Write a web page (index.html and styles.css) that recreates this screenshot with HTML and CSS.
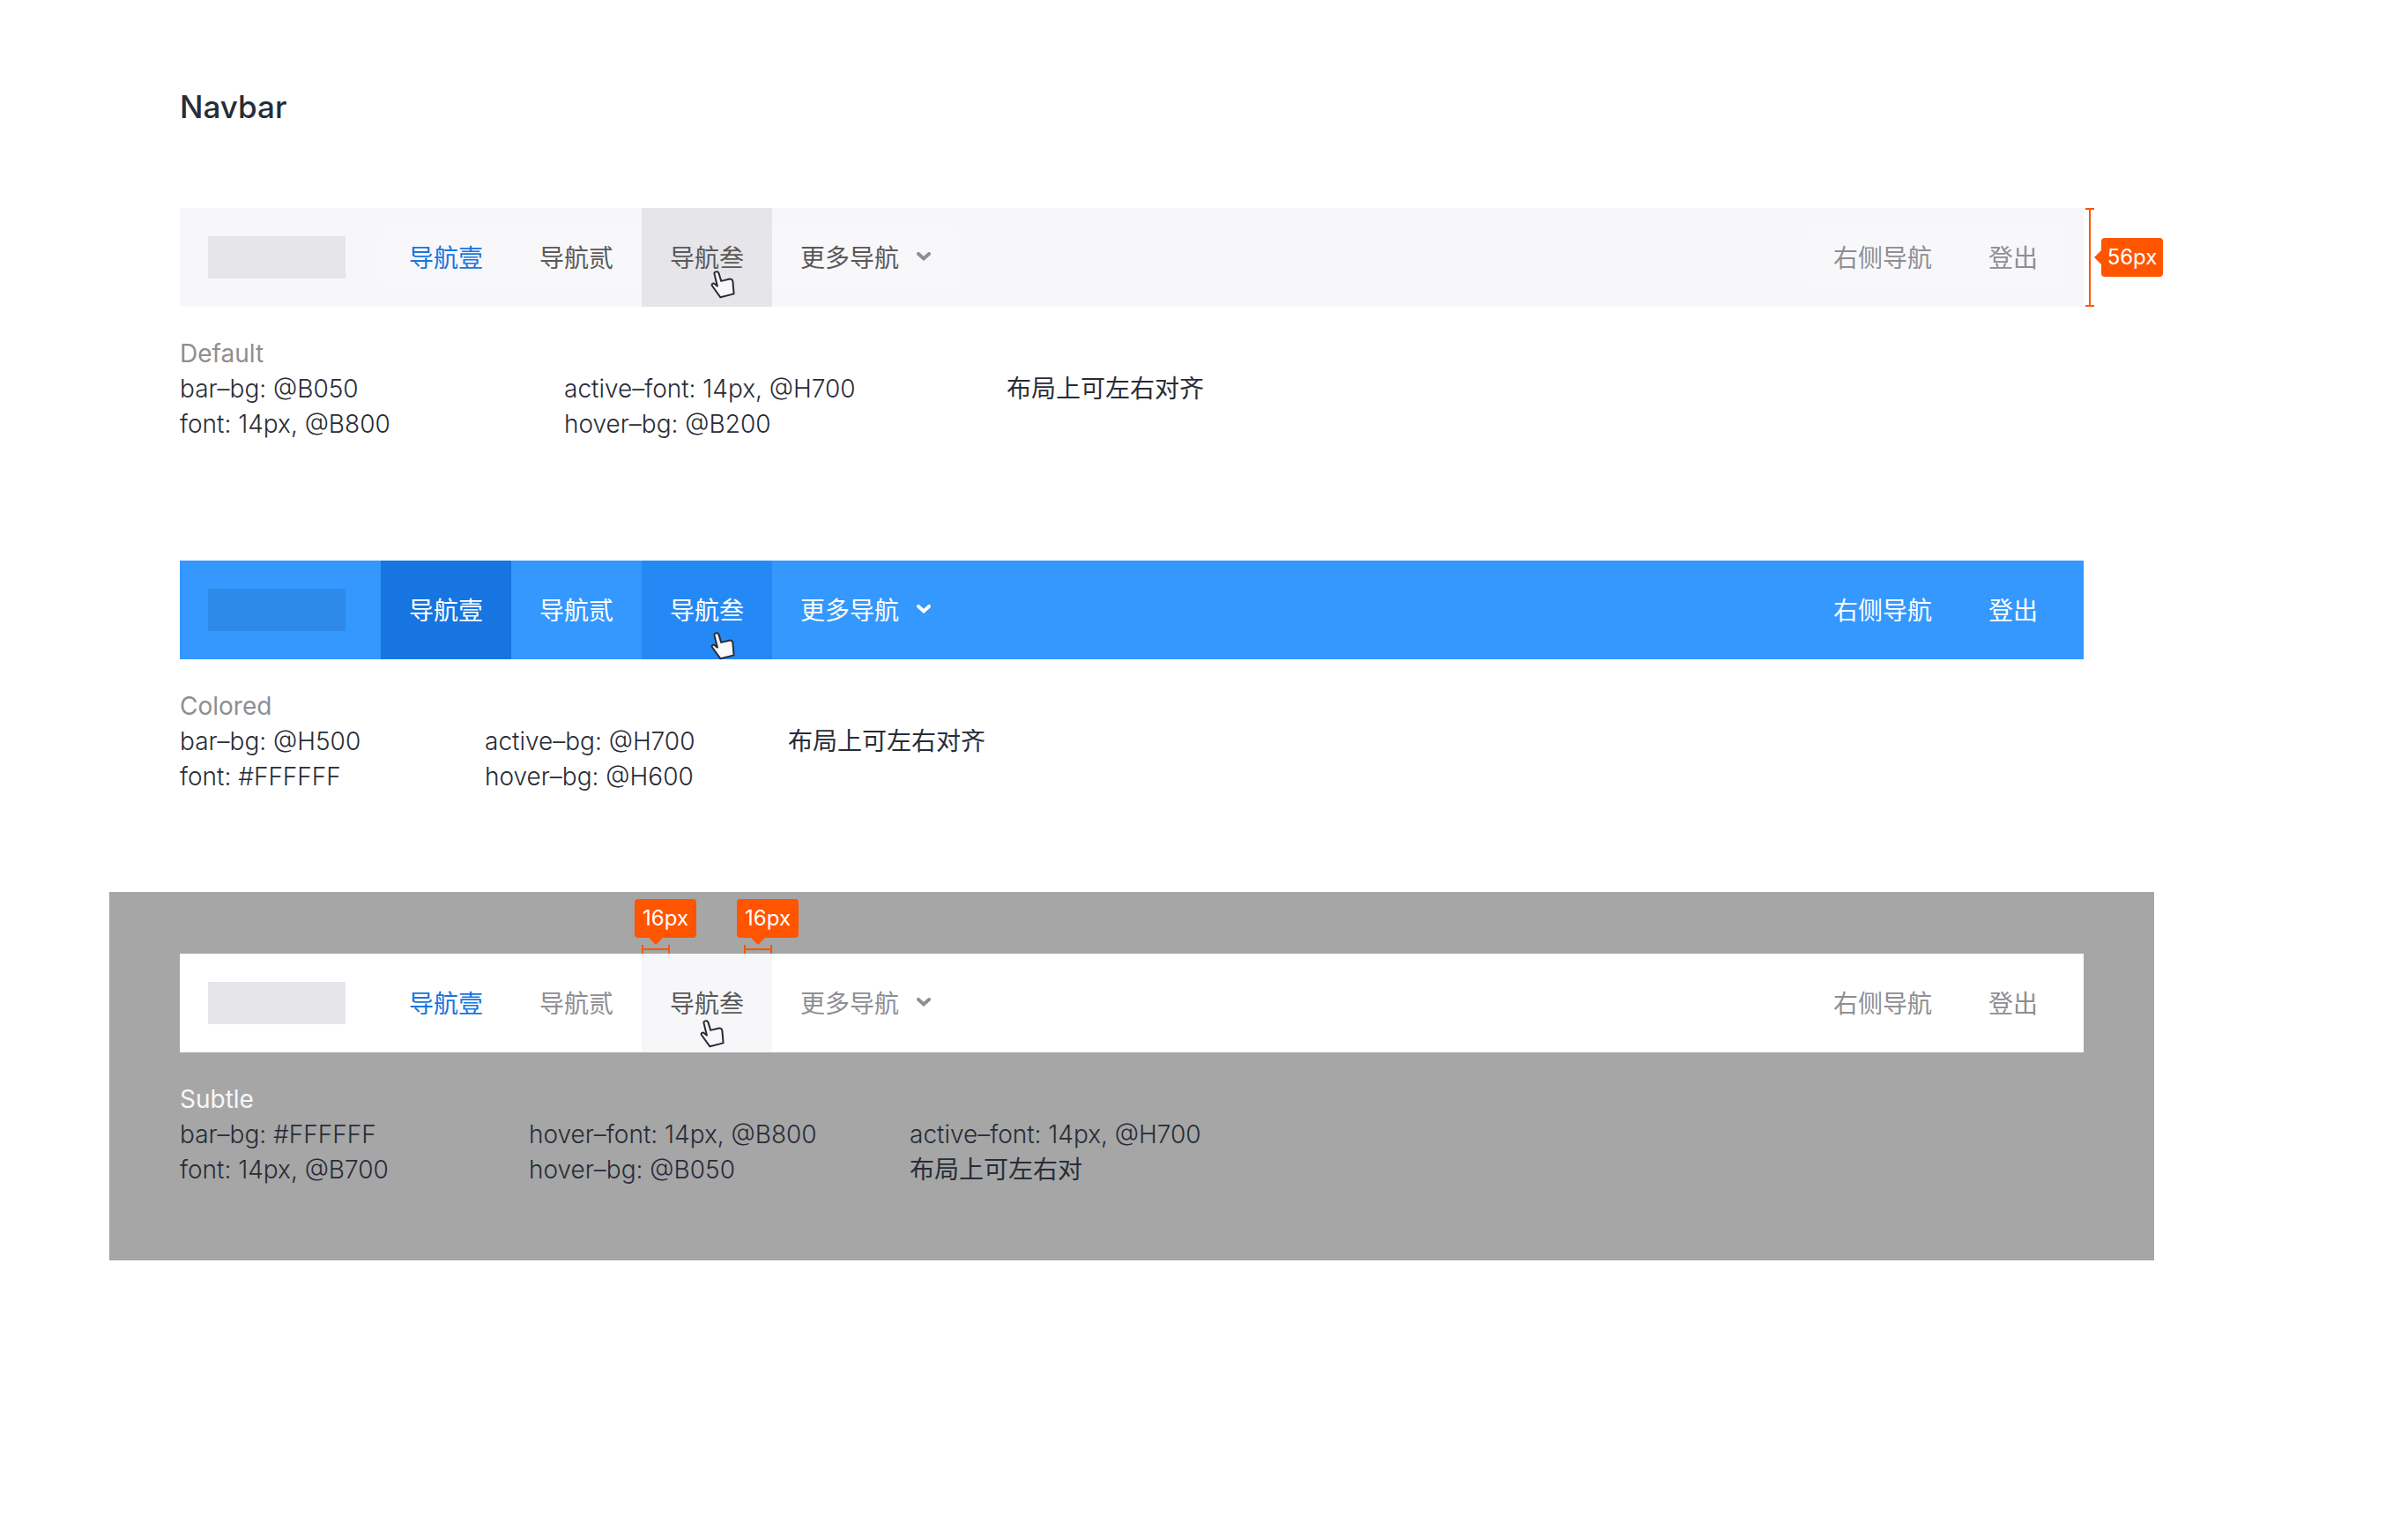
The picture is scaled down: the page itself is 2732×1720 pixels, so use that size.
FILE: index.html
```html
<!DOCTYPE html>
<html lang="zh-CN">
<head>
<meta charset="utf-8">
<title>Navbar</title>
<link rel="stylesheet" href="styles.css">
</head>
<body>
<svg class="symbols" aria-hidden="true">
  <symbol id="hand" viewBox="0 0 28 32">
    <path d="M6.1 1.4C4.8 1.7 4.2 2.7 4.6 4.2L7.9 17.6L4.6 15C3.2 13.9 1.1 15.1 1.8 17L11.4 30.3L26.6 26.4L25.4 12.4C25 9.8 23.3 9.2 21 9.8L12.2 11.9L9.6 3.4C9.2 1.8 7.8 1 6.1 1.4Z" stroke-width="2" stroke-linejoin="round"/>
  </symbol>
  <symbol id="chevron" viewBox="0 0 16 10">
    <path d="M2 2L8 7.4L14 2" fill="none" stroke="currentColor" stroke-width="4" stroke-linecap="round" stroke-linejoin="miter"/>
  </symbol>
</svg>
<main class="page">
  <h1 class="title">Navbar</h1>

  <section class="example">
    <div class="bar-frame">
      <nav class="bar bar-default" aria-label="Default">
        <div class="logo"></div>
        <div class="group">
          <a class="item active" href="#">导航壹</a>
          <a class="item" href="#">导航贰</a>
          <a class="item hover" href="#">导航叁<svg class="cursor cursor-near"><use href="#hand"/></svg></a>
          <button class="item more" type="button">更多导航<svg class="chevron"><use href="#chevron"/></svg></button>
        </div>
        <div class="group side">
          <a class="item" href="#">右侧导航</a>
          <a class="item" href="#">登出</a>
        </div>
      </nav>
      <div class="measure-height"><span class="tag tag-left">56px</span></div>
    </div>
    <h2 class="name">Default</h2>
    <div class="specs specs-default">
      <p>bar–bg: @B050<br>font: 14px, @B800</p>
      <p>active–font: 14px, @H700<br>hover–bg: @B200</p>
      <p><span class="note">布局上可左右对齐</span></p>
    </div>
  </section>

  <section class="example">
    <div class="bar-frame">
      <nav class="bar bar-colored" aria-label="Colored">
        <div class="logo"></div>
        <div class="group">
          <a class="item active" href="#">导航壹</a>
          <a class="item" href="#">导航贰</a>
          <a class="item hover" href="#">导航叁<svg class="cursor cursor-low"><use href="#hand"/></svg></a>
          <button class="item more" type="button">更多导航<svg class="chevron"><use href="#chevron"/></svg></button>
        </div>
        <div class="group side">
          <a class="item" href="#">右侧导航</a>
          <a class="item" href="#">登出</a>
        </div>
      </nav>
    </div>
    <h2 class="name">Colored</h2>
    <div class="specs specs-colored">
      <p>bar–bg: @H500<br>font: #FFFFFF</p>
      <p>active–bg: @H700<br>hover–bg: @H600</p>
      <p><span class="note">布局上可左右对齐</span></p>
    </div>
  </section>

  <section class="example panel">
    <div class="bar-frame">
      <nav class="bar bar-subtle" aria-label="Subtle">
        <div class="logo"></div>
        <div class="group">
          <a class="item active" href="#">导航壹</a>
          <a class="item" href="#">导航贰</a>
          <a class="item hover" href="#">导航叁<svg class="cursor cursor-subtle"><use href="#hand"/></svg>
            <span class="measure-pad pad-start"><span class="tag tag-top">16px</span></span>
            <span class="measure-pad pad-end"><span class="tag tag-top">16px</span></span>
          </a>
          <button class="item more" type="button">更多导航<svg class="chevron"><use href="#chevron"/></svg></button>
        </div>
        <div class="group side">
          <a class="item" href="#">右侧导航</a>
          <a class="item" href="#">登出</a>
        </div>
      </nav>
    </div>
    <h2 class="name">Subtle</h2>
    <div class="specs specs-subtle">
      <p>bar–bg: #FFFFFF<br>font: 14px, @B700</p>
      <p>hover–font: 14px, @B800<br>hover–bg: @B050</p>
      <p>active–font: 14px, @H700<br><span class="note">布局上可左右对</span></p>
    </div>
  </section>
</main>
</body>
</html>
```
FILE: styles.css
```css
* {
  box-sizing: border-box;
}

body {
  margin: 0;
  background: #fff;
  color: #282c37;
  font: 300 28px/40px Inter, "Noto Sans CJK SC", sans-serif;
}

h1,
h2,
p {
  margin: 0;
}

.symbols {
  display: none;
}

.page {
  padding: 95px 288px 96px 124px;
}

.title {
  margin-bottom: 89px;
  padding: 0 80px;
  font-size: 35px;
  line-height: 52px;
  font-weight: 500;
}

.example {
  padding: 0 80px;
}

.example + .example {
  margin-top: 135px;
}

.bar-frame {
  position: relative;
}

.bar {
  display: flex;
  align-items: center;
  height: 112px;
  padding: 0 20px 0 32px;
  font-weight: 400;
}

.logo {
  width: 156px;
  height: 48px;
  margin-right: 40px;
  background: #e5e5ea;
}

.group {
  display: flex;
  align-items: center;
  height: 100%;
}

.side {
  margin-left: auto;
}

.item {
  position: relative;
  display: flex;
  align-items: center;
  height: 72px;
  padding: 2px 32px 0;
  border: 0;
  border-radius: 12px;
  background: none;
  color: inherit;
  font: inherit;
  text-decoration: none;
  white-space: nowrap;
}

.item.hover {
  height: 100%;
  border-radius: 0;
}

.chevron {
  width: 16px;
  height: 10px;
  margin-bottom: 4px;
  margin-left: 20px;
  overflow: visible;
}

.bar-default {
  background: #f7f7fa;
  color: #595959;
}

.bar-default .item {
  background: #f8f8fb;
}

.bar-default .hover {
  background: #e5e5ea;
}

.bar-default .active,
.bar-subtle .active {
  color: #1675e0;
}

.bar-default .chevron,
.bar-default .side {
  color: #8e8e93;
}

.bar-colored {
  background: #3498ff;
  color: #fff;
}

.bar-colored .logo {
  background: #2f89e8;
}

.bar-colored .active {
  height: 100%;
  border-radius: 0;
  background: #1675e0;
}

.bar-colored .hover {
  background: #2589f5;
}

.bar-subtle {
  background: #fff;
  color: #8e8e93;
}

.bar-subtle .hover {
  background: #f7f7fa;
  color: #595959;
}

.panel {
  padding-top: 70px;
  padding-bottom: 83px;
  background: #a6a6a6;
}

.example + .panel {
  margin-top: 111px;
}

.name {
  margin-top: 33px;
  color: #8e8e93;
  font-size: 28px;
  line-height: 40px;
  font-weight: 400;
}

.panel .name {
  color: #f7f7fa;
}

.specs {
  display: grid;
}

.specs-default {
  grid-template-columns: 436px 502px 1fr;
}

.specs-colored {
  grid-template-columns: 346px 344px 1fr;
}

.specs-subtle {
  grid-template-columns: 396px 432px 1fr;
}

.note {
  font-weight: 400;
}

/* Mouse pointers laid over the hovered items */
.cursor {
  position: absolute;
  width: 28px;
  height: 32px;
  fill: #f8f8fb;
  stroke: #282c37;
}

.cursor-near {
  left: 78px;
  top: 71px;
}

.cursor-low {
  left: 78px;
  top: 81px;
}

.cursor-subtle {
  left: 66px;
  top: 75px;
}

/* Size marks drawn over the bars */
.measure-height {
  position: absolute;
  left: calc(100% + 2px);
  top: 0;
  width: 10px;
  height: 100%;
  border: solid #ff5500;
  border-width: 2px 0;
  background: linear-gradient(#ff5500, #ff5500) center / 2px 100% no-repeat;
}

.measure-pad {
  position: absolute;
  top: -10px;
  width: 32px;
  height: 10px;
  border: solid #ff5500;
  border-width: 0 2px;
  background: linear-gradient(#ff5500, #ff5500) center / 100% 2px no-repeat;
}

.pad-start {
  left: 0;
}

.pad-end {
  right: 0;
}

.tag {
  position: absolute;
  width: 70px;
  height: 44px;
  border-radius: 4px;
  background: #ff5500;
  color: #fff;
  font-size: 24px;
  line-height: 44px;
  font-weight: 400;
  text-align: center;
}

.tag::after {
  content: "";
  position: absolute;
  border: 8px solid transparent;
}

.tag-left {
  left: 18px;
  top: 32px;
}

.tag-left::after {
  right: 100%;
  top: 14px;
  border-left-width: 0;
  border-right-color: #ff5500;
}

.tag-top {
  left: -10px;
  bottom: 18px;
}

.tag-top::after {
  left: 16px;
  top: 100%;
  border-bottom-width: 0;
  border-top-color: #ff5500;
}
```
